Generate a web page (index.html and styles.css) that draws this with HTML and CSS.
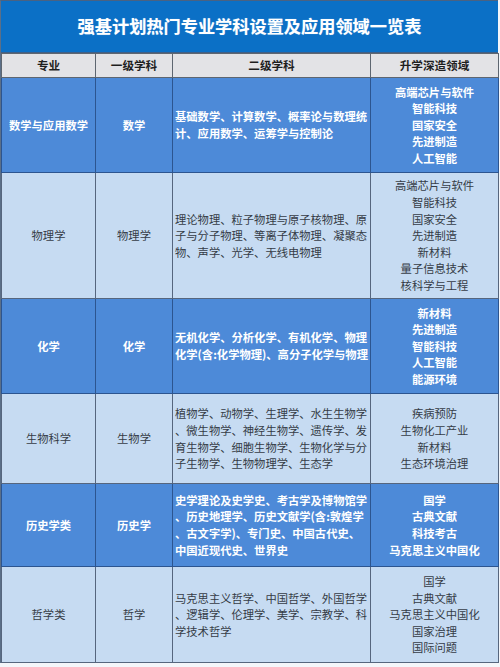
FILE: index.html
```html
<!DOCTYPE html>
<html lang="zh-CN">
<head>
<meta charset="utf-8">
<title>强基计划热门专业学科设置及应用领域一览表</title>
<link rel="stylesheet" href="styles.css">
</head>
<body>
<div class="sheet">
  <div class="title">强基计划热门专业学科设置及应用领域一览表</div>
  <table class="grid">
    <colgroup>
      <col class="c1"><col class="c2"><col class="c3"><col class="c4">
    </colgroup>
    <thead>
      <tr class="head">
        <th>专业</th><th>一级学科</th><th>二级学科</th><th>升学深造领域</th>
      </tr>
    </thead>
    <tbody>
      <tr class="blue r1">
        <td class="ctr">数学与应用数学</td>
        <td class="ctr">数学</td>
        <td class="sub">基础数学、计算数学、概率论与数理统<br>计、应用数学、运筹学与控制论</td>
        <td class="ctr">高端芯片与软件<br>智能科技<br>国家安全<br>先进制造<br>人工智能</td>
      </tr>
      <tr class="light r2">
        <td class="ctr">物理学</td>
        <td class="ctr">物理学</td>
        <td class="sub">理论物理、粒子物理与原子核物理、原<br>子与分子物理、等离子体物理、凝聚态<br>物、声学、光学、无线电物理</td>
        <td class="ctr">高端芯片与软件<br>智能科技<br>国家安全<br>先进制造<br>新材料<br>量子信息技术<br>核科学与工程</td>
      </tr>
      <tr class="blue r3">
        <td class="ctr">化学</td>
        <td class="ctr">化学</td>
        <td class="sub">无机化学、分析化学、有机化学、物理<br>化学(含:化学物理)、高分子化学与物理</td>
        <td class="ctr">新材料<br>先进制造<br>智能科技<br>人工智能<br>能源环境</td>
      </tr>
      <tr class="light r4">
        <td class="ctr">生物科学</td>
        <td class="ctr">生物学</td>
        <td class="sub">植物学、动物学、生理学、水生生物学<br>、微生物学、神经生物学、遗传学、发<br>育生物学、细胞生物学、生物化学与分<br>子生物学、生物物理学、生态学</td>
        <td class="ctr">疾病预防<br>生物化工产业<br>新材料<br>生态环境治理</td>
      </tr>
      <tr class="blue r5">
        <td class="ctr">历史学类</td>
        <td class="ctr">历史学</td>
        <td class="sub">史学理论及史学史、考古学及博物馆学<br>、历史地理学、历史文献学(含:敦煌学<br>、古文字学)、专门史、中国古代史、<br>中国近现代史、世界史</td>
        <td class="ctr">国学<br>古典文献<br>科技考古<br>马克思主义中国化</td>
      </tr>
      <tr class="light r6">
        <td class="ctr">哲学类</td>
        <td class="ctr">哲学</td>
        <td class="sub">马克思主义哲学、中国哲学、外国哲学<br>、逻辑学、伦理学、美学、宗教学、科<br>学技术哲学</td>
        <td class="ctr">国学<br>古典文献<br>马克思主义中国化<br>国家治理<br>国际问题</td>
      </tr>
    </tbody>
  </table>
</div>
</body>
</html>
```

FILE: styles.css
```css
html, body {
  margin: 0;
  padding: 0;
  background: #f4f6fa;
}

body {
  width: 500px;
  height: 667px;
  overflow: hidden;
  font-family: "Noto Sans CJK SC", "Noto Sans", sans-serif;
}

.sheet {
  width: 498px;
  border-left: 1px solid #5b6f88;
  border-top: 1px solid #4a6282;
  box-sizing: border-box;
}

.title {
  height: 52px;
  background: #0b70c6;
  color: #ffffff;
  font-weight: 700;
  font-size: 17.2px;
  letter-spacing: 0;
  display: flex;
  align-items: center;
  justify-content: center;
  padding-bottom: 2px;
  box-sizing: border-box;
  text-shadow: 0 0 1px rgba(255, 255, 255, 0.4);
  border-bottom: 1px solid #3f5f86;
}

.grid {
  width: 497px;
  border-collapse: collapse;
  table-layout: fixed;
}

.c1 { width: 94px; }
.c2 { width: 77px; }
.c3 { width: 198px; }
.c4 { width: 128px; }

.grid th,
.grid td {
  border: 1px solid #4b5f7a;
  padding: 0;
  vertical-align: middle;
  font-size: 11.3px;
  line-height: 16.6px;
}

.head {
  height: 24px;
  background: #e3e3e6;
}

.head th {
  color: #1e1e1e;
  font-weight: 700;
  font-size: 11.6px;
  text-align: center;
  border-color: #5e6670;
}

.ctr {
  text-align: center;
  white-space: nowrap;
}

.sub {
  text-align: left;
  white-space: nowrap;
  padding-left: 2px !important;
}

.blue {
  background: #4d8ad8;
  color: #ffffff;
  font-weight: 700;
}

.blue td {
  border-color: #2c5590;
}

.light {
  background: #c6dbf2;
  color: #353c46;
  font-weight: 400;
}

.light td {
  border-color: #56667e;
}

.r1 { height: 95px; }
.r2 { height: 126px; }
.r3 { height: 95px; }
.r4 { height: 90px; }
.r5 { height: 83px; }
.r6 { height: 96px; }
```
